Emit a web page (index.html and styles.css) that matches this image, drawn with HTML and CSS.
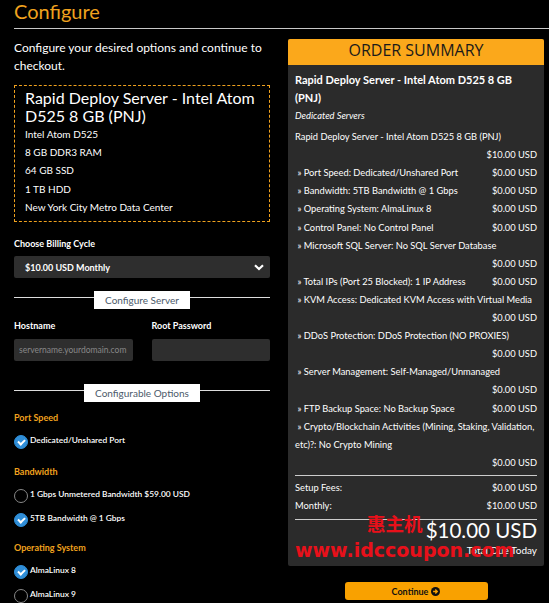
FILE: index.html
```html
<!DOCTYPE html>
<html lang="en">
<head>
    <meta charset="UTF-8">
    <meta name="viewport" content="width=device-width, initial-scale=1.0">
    <title>Configure</title>
    <link rel="stylesheet" href="styles.css">
</head>
<body>

    <div class="page-header">
        <h1>Configure</h1>
    </div>

    <div class="container">
        <div class="left-col">
            <p class="intro">Configure your desired options and continue to checkout.</p>

            <div class="product-box">
                <div class="product-title">Rapid Deploy Server - Intel Atom D525 8 GB (PNJ)</div>
                <ul class="product-features">
                    <li>Intel Atom D525</li>
                    <li>8 GB DDR3 RAM</li>
                    <li>64 GB SSD</li>
                    <li>1 TB HDD</li>
                    <li>New York City Metro Data Center</li>
                </ul>
            </div>

            <label class="field-label billing-label">Choose Billing Cycle</label>
            <div class="select-box">
                <span>$10.00 USD Monthly</span>
                <svg class="chevron" width="10" height="7" viewBox="0 0 10 7"><path d="M1 1.2 L5 5 L9 1.2" fill="none" stroke="#fff" stroke-width="2.2"/></svg>
            </div>

            <div class="divider"><span>Configure Server</span></div>

            <div class="server-fields">
                <div class="field">
                    <label class="field-label">Hostname</label>
                    <input type="text" placeholder="servername.yourdomain.com">
                </div>
                <div class="field">
                    <label class="field-label">Root Password</label>
                    <input type="password">
                </div>
            </div>

            <div class="divider divider-options"><span>Configurable Options</span></div>

            <div class="option-group">
                <div class="option-title">Port Speed</div>
                <div class="option checked"><span class="radio"></span>Dedicated/Unshared Port</div>
            </div>

            <div class="option-group">
                <div class="option-title">Bandwidth</div>
                <div class="option"><span class="radio"></span>1 Gbps Unmetered Bandwidth $59.00 USD</div>
                <div class="option checked"><span class="radio"></span>5TB Bandwidth @ 1 Gbps</div>
            </div>

            <div class="option-group">
                <div class="option-title">Operating System</div>
                <div class="option checked"><span class="radio"></span>AlmaLinux 8</div>
                <div class="option"><span class="radio"></span>AlmaLinux 9</div>
            </div>
        </div>

        <div class="right-col">
            <div class="summary">
                <div class="summary-head">ORDER SUMMARY</div>
                <div class="summary-body">
                    <div class="summary-product">Rapid Deploy Server - Intel Atom D525 8 GB (PNJ)</div>
                    <div class="summary-group">Dedicated Servers</div>

                    <div class="line split"><span>Rapid Deploy Server - Intel Atom D525 8 GB (PNJ)</span><span class="price">$10.00 USD</span></div>
                    <div class="line"><span>&nbsp;» Port Speed: Dedicated/Unshared Port</span><span class="price">$0.00 USD</span></div>
                    <div class="line"><span>&nbsp;» Bandwidth: 5TB Bandwidth @ 1 Gbps</span><span class="price">$0.00 USD</span></div>
                    <div class="line"><span>&nbsp;» Operating System: AlmaLinux 8</span><span class="price">$0.00 USD</span></div>
                    <div class="line"><span>&nbsp;» Control Panel: No Control Panel</span><span class="price">$0.00 USD</span></div>
                    <div class="line split"><span>&nbsp;» Microsoft SQL Server: No SQL Server Database</span><span class="price">$0.00 USD</span></div>
                    <div class="line"><span>&nbsp;» Total IPs (Port 25 Blocked): 1 IP Address</span><span class="price">$0.00 USD</span></div>
                    <div class="line split"><span class="nowrap">&nbsp;» KVM Access: Dedicated KVM Access with Virtual Media</span><span class="price">$0.00 USD</span></div>
                    <div class="line split"><span>&nbsp;» DDoS Protection: DDoS Protection (NO PROXIES)</span><span class="price">$0.00 USD</span></div>
                    <div class="line split"><span>&nbsp;» Server Management: Self-Managed/Unmanaged</span><span class="price">$0.00 USD</span></div>
                    <div class="line"><span>&nbsp;» FTP Backup Space: No Backup Space</span><span class="price">$0.00 USD</span></div>
                    <div class="line split"><span><span class="nowrap">&nbsp;» Crypto/Blockchain Activities (Mining, Staking, Validation,</span> etc)?: No Crypto Mining</span><span class="price">$0.00 USD</span></div>

                    <div class="totals">
                        <div class="line"><span>Setup Fees:</span><span class="price">$0.00 USD</span></div>
                        <div class="line"><span>Monthly:</span><span class="price">$10.00 USD</span></div>
                    </div>

                    <div class="total-due">
                        <div class="amount">$10.00 USD</div>
                        <div class="due-label">Total Due Today</div>
                    </div>

                    <div class="watermark">
                        <div class="wm-cn">惠主机</div>
                        <div class="wm-url">www.idccoupon.com</div>
                    </div>
                </div>
            </div>

            <div class="actions">
                <button class="continue-btn">Continue
                    <svg width="9" height="9" viewBox="0 0 10 10"><circle cx="5" cy="5" r="5" fill="#111"/><path d="M2.3 5 H6.6 M4.8 2.8 L7 5 L4.8 7.2" fill="none" stroke="#f9a100" stroke-width="1.5"/></svg>
                </button>
            </div>
        </div>
    </div>

</body>
</html>
```

FILE: styles.css
```css
* {
    box-sizing: border-box;
    margin: 0;
    padding: 0;
}
body {
    font-family: Lato, 'Open Sans', sans-serif;
    background-color: #000;
    color: #fff;
    overflow: hidden;
}
.page-header {
    margin-left: 14px;
    border-bottom: 1px solid #c8c8c8;
    height: 29px;
}
.page-header h1 {
    font-family: Lato, sans-serif;
    font-weight: 400;
    font-size: 20px;
    line-height: 23px;
    color: #f0a21e;
}
.container {
    display: flex;
    gap: 18px;
    padding: 10px 5px 0 14px;
}
.left-col {
    width: 256px;
}
.right-col {
    width: 256px;
}
.intro {
    font-size: 12px;
    line-height: 18px;
    margin-bottom: 10px;
}
.product-box {
    border: 1px dashed #f0a21e;
    padding: 3px 10px 4px;
    height: 137px;
}
.product-title {
    font-size: 16px;
    line-height: 18px;
}
.product-features {
    list-style: none;
    font-size: 10px;
    line-height: 18.2px;
}
.field-label {
    display: block;
    font-size: 9px;
    font-weight: bold;
    line-height: 12px;
}
.billing-label {
    margin-top: 16px;
}
.select-box {
    display: flex;
    justify-content: space-between;
    align-items: center;
    margin-top: 6px;
    height: 22px;
    background: #2e2e2e;
    border-radius: 2px;
    padding: 0 6px 0 11px;
    font-size: 9px;
    font-weight: bold;
}
.divider {
    position: relative;
    display: flex;
    justify-content: center;
    margin-top: 13px;
    height: 18px;
}
.divider::before {
    content: '';
    position: absolute;
    left: 0;
    right: 0;
    top: 6px;
    border-top: 1px solid #ddd;
}
.divider span {
    position: relative;
    background: #fff;
    color: #4b5a6a;
    font-size: 10px;
    line-height: 18px;
    padding: 0 11px;
}
.server-fields {
    display: flex;
    gap: 19px;
    margin-top: 11px;
}
.field {
    flex: 1;
}
.field input {
    display: block;
    width: 100%;
    height: 22px;
    margin-top: 7px;
    background: #2e2e2e;
    border: none;
    border-radius: 2px;
    padding: 0 5px;
    font-family: Lato, sans-serif;
    font-size: 8.5px;
    color: #fff;
}
.field input::placeholder {
    color: #888;
}
.divider-options {
    margin-top: 23px;
}
.option-group {
    margin-top: 10px;
}
.option-group + .option-group {
    margin-top: 19px;
}
.option-group:last-child {
    margin-top: 17px;
}
.option-title {
    color: #f0a21e;
    font-size: 9px;
    font-weight: bold;
    line-height: 12px;
    margin-bottom: 9px;
}
.option {
    display: flex;
    align-items: center;
    font-size: 8.4px;
    font-weight: 600;
    line-height: 12px;
    height: 14px;
    margin-bottom: 10px;
}
.radio {
    width: 14px;
    height: 14px;
    border-radius: 50%;
    border: 1px solid #888;
    margin-right: 2px;
    margin-top: 3px;
    flex-shrink: 0;
}
.option.checked .radio {
    background: #2f8ed8;
    border-color: #2f8ed8;
    position: relative;
}
.option.checked .radio::after {
    content: '';
    position: absolute;
    left: 3px;
    top: 3px;
    width: 5px;
    height: 3px;
    border-left: 2px solid #fff;
    border-bottom: 2px solid #fff;
    transform: rotate(-45deg);
}
.summary {
    background: #2b2b2b;
    border-radius: 2px;
    overflow: hidden;
}
.summary-head {
    background: #fba81b;
    color: #1a1a1a;
    font-family: 'Open Sans', sans-serif;
    font-size: 16px;
    line-height: 23px;
    padding-bottom: 3px;
    text-align: center;
}
.summary-body {
    position: relative;
    padding: 6px 7px 10px;
    font-size: 9.3px;
    line-height: 18.1px;
}
.summary-product {
    font-size: 11px;
    font-weight: bold;
    line-height: 18px;
}
.summary-group {
    font-style: italic;
    margin-bottom: 3px;
}
.line {
    display: flex;
    justify-content: space-between;
}
.line.split {
    flex-direction: column;
}
.line.split .price {
    align-self: flex-end;
}
.nowrap {
    white-space: nowrap;
}
.totals {
    border-top: 1px solid #ccc;
    border-bottom: 1px solid #ccc;
    margin-top: 3px;
    padding: 3px 0 4px;
}
.total-due {
    text-align: right;
}
.amount {
    font-size: 20.5px;
    line-height: 24px;
    margin-top: -2px;
}
.due-label {
    font-size: 10px;
    line-height: 12px;
    margin-top: 2px;
}
.watermark {
    position: absolute;
    left: 7px;
    bottom: 5px;
    color: #e8101a;
    font-weight: bold;
    pointer-events: none;
}
.wm-cn {
    font-family: 'Noto Sans CJK SC', sans-serif;
    font-size: 18.5px;
    line-height: 22px;
    margin-left: 72px;
    margin-bottom: 5px;
}
.wm-url {
    font-family: 'DejaVu Sans', sans-serif;
    font-size: 19px;
    line-height: 22px;
}
.actions {
    display: flex;
    justify-content: center;
    margin-top: 16px;
}
.continue-btn {
    display: flex;
    align-items: center;
    justify-content: center;
    gap: 3px;
    width: 143px;
    height: 18px;
    background: #f9a100;
    border: none;
    border-radius: 3px;
    font-family: Lato, sans-serif;
    font-size: 9px;
    font-weight: bold;
    color: #111;
}
```
